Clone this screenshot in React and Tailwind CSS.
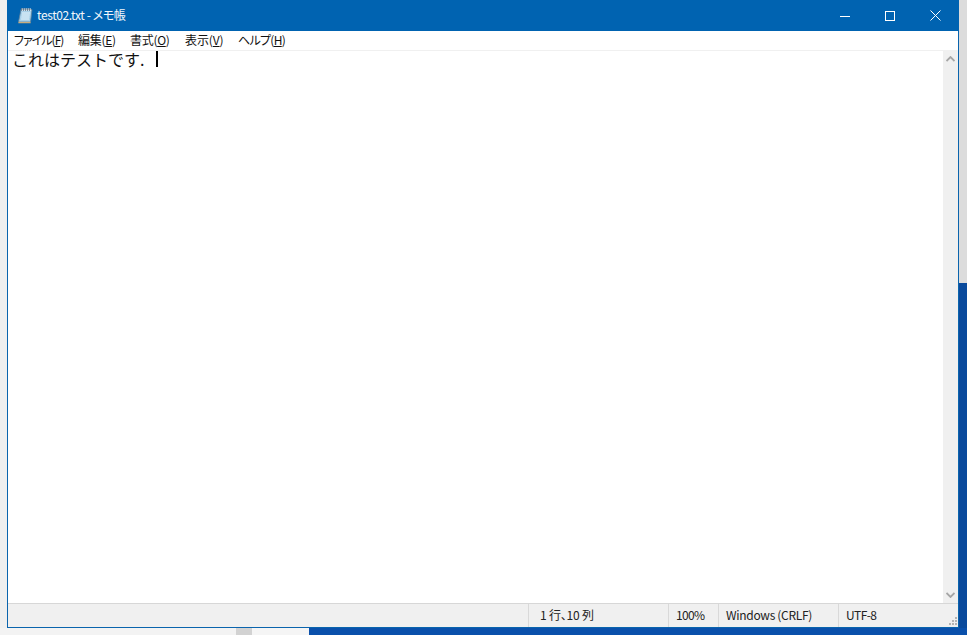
import React from 'react'

const jp = '[font-family:"Noto_Sans_CJK_JP","Noto_Sans",sans-serif]'

const NotepadIcon = () => (
  <svg width="17" height="17" viewBox="0 0 17 17" className="shrink-0">
    <path d="M4 2.5h11l-1.5 12.5H1.5z" fill="#a9d2ea" stroke="#5d7f98" strokeWidth="0.8" />
    <path d="M5 6h8M4.7 8h8M4.4 10h8M4.1 12h8" stroke="#e6f3fa" strokeWidth="1" />
    <path d="M1.5 15h12l0.2 1.3H1.3z" fill="#c8ad7e" />
    <path d="M5 1v3M7 1v3M9 1v3M11 1v3M13 1v3" stroke="#f4f4f4" strokeWidth="1" />
    <path d="M4.5 1v3M6.5 1v3M8.5 1v3M10.5 1v3M12.5 1v3" stroke="#44586a" strokeWidth="0.6" />
  </svg>
)

const menus = [
  { label: 'ファイル(', key: 'F', width: 'w-[64px] tracking-[-1px]' },
  { label: '編集(', key: 'E', width: 'w-[52px] tracking-[-0.3px]' },
  { label: '書式(', key: 'O', width: 'w-[55px] tracking-[-0.3px]' },
  { label: '表示(', key: 'V', width: 'w-[53px] tracking-[-0.1px]' },
  { label: 'ヘルプ(', key: 'H', width: 'w-[60px] tracking-[-0.7px]' },
]

const statusCells = [
  { text: '1 行、10 列', width: 'w-[140px] pl-[11px] tracking-[-0.2px]' },
  { text: '100%', width: 'w-[50px] pl-[7px] tracking-[-0.7px]' },
  { text: 'Windows (CRLF)', width: 'w-[120px] pl-[7px] tracking-[-0.3px]' },
  { text: 'UTF-8', width: 'w-[120px] pl-[7px] tracking-[-0.6px]' },
]

export default function App() {
  return (
    <div className={`w-[967px] h-[635px] overflow-hidden flex flex-col bg-[#f1f1f1] ${jp}`}>
      <div className="flex h-[628px]">
        <div className="w-[7px] bg-[#efefef]" />

        <div className="w-[952px] flex flex-col bg-white border-x border-b border-[#0a64ad]">
          {/* title bar */}
          <div className="h-[31px] -mx-px bg-[#0063b1] flex items-center text-white shrink-0">
            <div className="pl-[10px] w-[30px] flex items-center"><NotepadIcon /></div>
            <span className="text-[12px] leading-none pb-[2px] tracking-[-0.4px] [font-feature-settings:'palt'] text-[#f2f7fb]">test02.txt - メモ帳</span>
            <div className="ml-auto flex h-full pr-px">
              <div className="w-[45px] flex items-center justify-center">
                <svg width="10" height="10" viewBox="0 0 10 10"><path d="M0 5.5h10" stroke="#fff" strokeWidth="1" /></svg>
              </div>
              <div className="w-[45px] flex items-center justify-center">
                <svg width="10" height="10" viewBox="0 0 10 10"><rect x="0.5" y="0.5" width="9" height="9" fill="none" stroke="#fff" /></svg>
              </div>
              <div className="w-[46px] flex items-center justify-center">
                <svg width="11" height="11" viewBox="0 0 11 11"><path d="M0.5 0.5l10 10M10.5 0.5l-10 10" stroke="#fff" strokeWidth="1" /></svg>
              </div>
            </div>
          </div>

          {/* menu bar */}
          <div className="h-[20px] shrink-0 flex items-center pl-[6px] pb-[2px] border-b border-[#f0f0f0] bg-white">
            {menus.map((m) => (
              <span key={m.key} className={`${m.width} text-[12px] leading-none [font-feature-settings:'palt'] text-[#111] whitespace-nowrap`}>
                {m.label}<span className="underline">{m.key}</span>)
              </span>
            ))}
          </div>

          {/* editor */}
          <div className="flex-1 flex min-h-0">
            <div className="flex-1 pl-[4px] flex items-start">
              <div className="flex items-center h-[15px] text-[16px] leading-none text-[#111] whitespace-nowrap">
                これはテストです.
                <span className="inline-block w-[2px] h-[16px] bg-black ml-[12px] mt-[1px]" />
              </div>
            </div>
            <div className="w-[15px] bg-[#f0f0f0] flex flex-col justify-between items-center py-[5px]">
              <svg width="9" height="6" viewBox="0 0 9 6"><path d="M0.5 5L4.5 1l4 4" fill="none" stroke="#a6a6a6" strokeWidth="1.8" /></svg>
              <svg width="9" height="6" viewBox="0 0 9 6"><path d="M0.5 1L4.5 5l4-4" fill="none" stroke="#a6a6a6" strokeWidth="1.8" /></svg>
            </div>
          </div>

          {/* status bar */}
          <div className="h-[24px] shrink-0 bg-[#f0f0f0] border-t border-[#d7d7d7] flex relative">
            <div className="w-[520px]" />
            {statusCells.map((c) => (
              <div key={c.text} className={`${c.width} border-l border-[#d9d9d9] flex items-center pb-[2px] text-[12px] leading-none [font-feature-settings:'palt'] text-[#222] whitespace-nowrap`}>
                {c.text}
              </div>
            ))}
            <svg width="10" height="10" viewBox="0 0 10 10" className="absolute right-[0px] bottom-[1px]">
              <path d="M7 1h2v2H7zM4 4h2v2H4zM7 4h2v2H7zM1 7h2v2H1zM4 7h2v2H4zM7 7h2v2H7z" fill="#b4b4b4" />
            </svg>
          </div>
        </div>

        {/* desktop behind, right side */}
        <div className="w-[8px] flex flex-col">
          <div className="h-[283px] bg-[#dcdcdc]" />
          <div className="flex-1 bg-[#0a4a9c]" />
        </div>
      </div>

      {/* desktop behind, bottom */}
      <div className="h-[7px] flex">
        <div className="w-[236px] bg-[#f3f3f3]" />
        <div className="w-[16px] bg-[#d2d2d2]" />
        <div className="w-[57px] bg-[#f5f5f5]" />
        <div className="flex-1 bg-[#0a50ab]" />
      </div>
    </div>
  )
}
